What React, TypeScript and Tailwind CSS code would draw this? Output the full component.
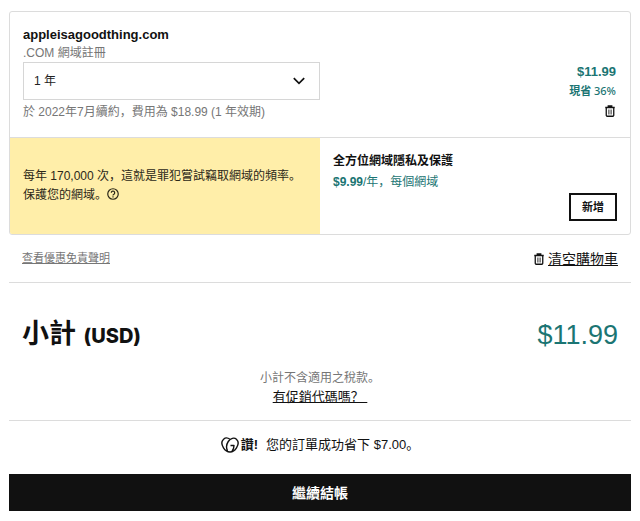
import React from "react";

interface IconProps {
  className?: string;
}

const TrashIcon: React.FC<IconProps> = ({ className }) => (
  <svg
    viewBox="0 0 20 24"
    fill="none"
    stroke="currentColor"
    strokeWidth="2.6"
    className={className}
    aria-hidden="true"
  >
    <path d="M0.5 5h19M6.5 5V2h7v3M2.5 5v15.7a1.8 1.8 0 0 0 1.8 1.8h11.4a1.8 1.8 0 0 0 1.8-1.8V5" />
    <path d="M7.8 9v10M12.2 9v10" strokeWidth="1.8" />
  </svg>
);

const ChevronIcon: React.FC<IconProps> = ({ className }) => (
  <svg
    viewBox="0 0 12 8"
    fill="none"
    stroke="currentColor"
    strokeWidth="1.7"
    className={className}
    aria-hidden="true"
  >
    <path d="M0.8 1.2 6 6.4l5.2-5.2" />
  </svg>
);

const HelpIcon: React.FC<IconProps> = ({ className }) => (
  <svg
    viewBox="0 0 24 24"
    fill="none"
    stroke="currentColor"
    strokeWidth="2.4"
    className={className}
    aria-hidden="true"
  >
    <circle cx="12" cy="12" r="10.5" />
    <path d="M8.6 9.6a3.4 3.4 0 1 1 5.2 2.9c-1.2.7-1.8 1.2-1.8 2.4" />
    <path d="M12 16.4v2.4" />
  </svg>
);

const HeartLogo: React.FC<IconProps> = ({ className }) => (
  <svg
    viewBox="0 0 36 32"
    fill="none"
    stroke="currentColor"
    strokeWidth="2.8"
    strokeLinejoin="round"
    className={className}
    aria-hidden="true"
  >
    <path d="M18 4.5C14 1.5 8.5 1.2 5.2 4.3 1 8.3 1 15.5 5 21.8 8 26.7 12.5 30 18 30s10-3.3 13-8.2c4-6.3 4-13.5-.2-17.5C26.5.4 19 2.3 14.5 9c-4 6-4.500 12.500-1.500 18.500" />
    <path d="M19 17h7c0 5-1.5 8.5-4 12" />
  </svg>
);

const CartItem: React.FC = () => (
  <section className="overflow-hidden rounded-[3px] border border-[#dcdcdc]">
    <div className="grid grid-cols-2 border-b border-[#dcdcdc] py-[13px]">
      <div className="pl-[13px]">
        <h2 className="text-[13px] leading-5 font-bold">appleisagoodthing.com</h2>
        <p className="text-xs leading-[17px] text-[#767676]">.COM 網域註冊</p>
        <div className="relative">
          <select
            aria-label="註冊年期"
            className="block h-[38px] w-full appearance-none border border-[#d6d6d6] bg-white px-[10px] text-xs text-[#222]"
          >
            <option>1 年</option>
          </select>
          <ChevronIcon className="pointer-events-none absolute top-[15px] right-[15px] h-2 w-3" />
        </div>
        <p className="text-xs leading-6 text-[#767676]">
          於 2022年7月續約，費用為 $18.99 (1 年效期)
        </p>
      </div>

      <div className="flex flex-col items-end justify-end pr-[14px] pb-[5px] text-[#1b7573]">
        <span className="text-[13px] leading-5 font-bold">$11.99</span>
        <span className="font-['Noto_Sans','Noto_Sans_CJK_SC',sans-serif] text-[11px] leading-[17px] font-medium">
          <b>現省</b> 36%
        </span>
        <button aria-label="移除" className="mt-1 mr-px flex h-4 items-center text-[#111]">
          <TrashIcon className="h-3 w-[10px]" />
        </button>
      </div>
    </div>

    <div className="grid min-h-24 grid-cols-2">
      <div className="flex flex-col justify-center bg-[#ffeea9] pl-[13px] text-xs leading-[19px] text-[#2b2718]">
        <p>每年 170,000 次，這就是罪犯嘗試竊取網域的頻率。</p>
        <div className="flex items-center">
          保護您的網域。
          <button aria-label="說明" className="mb-1">
            <HelpIcon className="size-3" />
          </button>
        </div>
      </div>

      <div className="flex flex-col p-[13px]">
        <h3 className="text-xs leading-5 font-bold">全方位網域隱私及保護</h3>
        <p className="text-xs leading-[22px] text-[#1b7573]">
          <b>$9.99</b>/年，每個網域
        </p>
        <button className="h-7 w-12 self-end border-2 border-[#111] text-[11px] font-bold">
          新增
        </button>
      </div>
    </div>
  </section>
);

const App: React.FC = () => {
  return (
    <main className="bg-white px-[9px] pt-[11px] pb-[10px] font-['Liberation_Sans','Noto_Sans_CJK_SC',sans-serif] text-[#111]">
      <CartItem />

      <div className="flex h-12 items-center justify-between border-b border-[#dcdcdc] px-[13px]">
        <a href="#disclaimer" className="text-[11px] text-[#767676] underline">
          查看優惠免責聲明
        </a>
        <button className="flex items-center gap-1 text-sm">
          <TrashIcon className="h-3 w-[10px]" />
          <span className="underline">清空購物車</span>
        </button>
      </div>

      <div className="flex items-center justify-between px-[13px] pt-[31px]">
        <h1 className="text-[27px] leading-10 font-bold">
          小計{" "}
          <span className="font-['Inter',sans-serif] text-[20px] font-extrabold">(USD)</span>
        </h1>
        <span className="text-[27px] leading-10 text-[#1b7573]">$11.99</span>
      </div>

      <div className="flex flex-col items-center border-b border-[#dcdcdc] pt-3 pb-[14px]">
        <p className="text-xs leading-5 text-[#767676]">小計不含適用之稅款。</p>
        <a href="#promo" className="text-[13px] leading-[18px] underline">
          有促銷代碼嗎？&nbsp;
        </a>
      </div>

      <p className="flex h-[53px] items-center justify-center pb-[6px] text-[13px]">
        <HeartLogo className="mr-0.5 h-4 w-[18px]" />
        <b className="mr-2">讚!</b>
        您的訂單成功省下 $7.00。
      </p>

      <button className="h-[37px] w-full bg-[#111] text-sm font-bold text-white">
        繼續結帳
      </button>
    </main>
  );
};

export default App;
